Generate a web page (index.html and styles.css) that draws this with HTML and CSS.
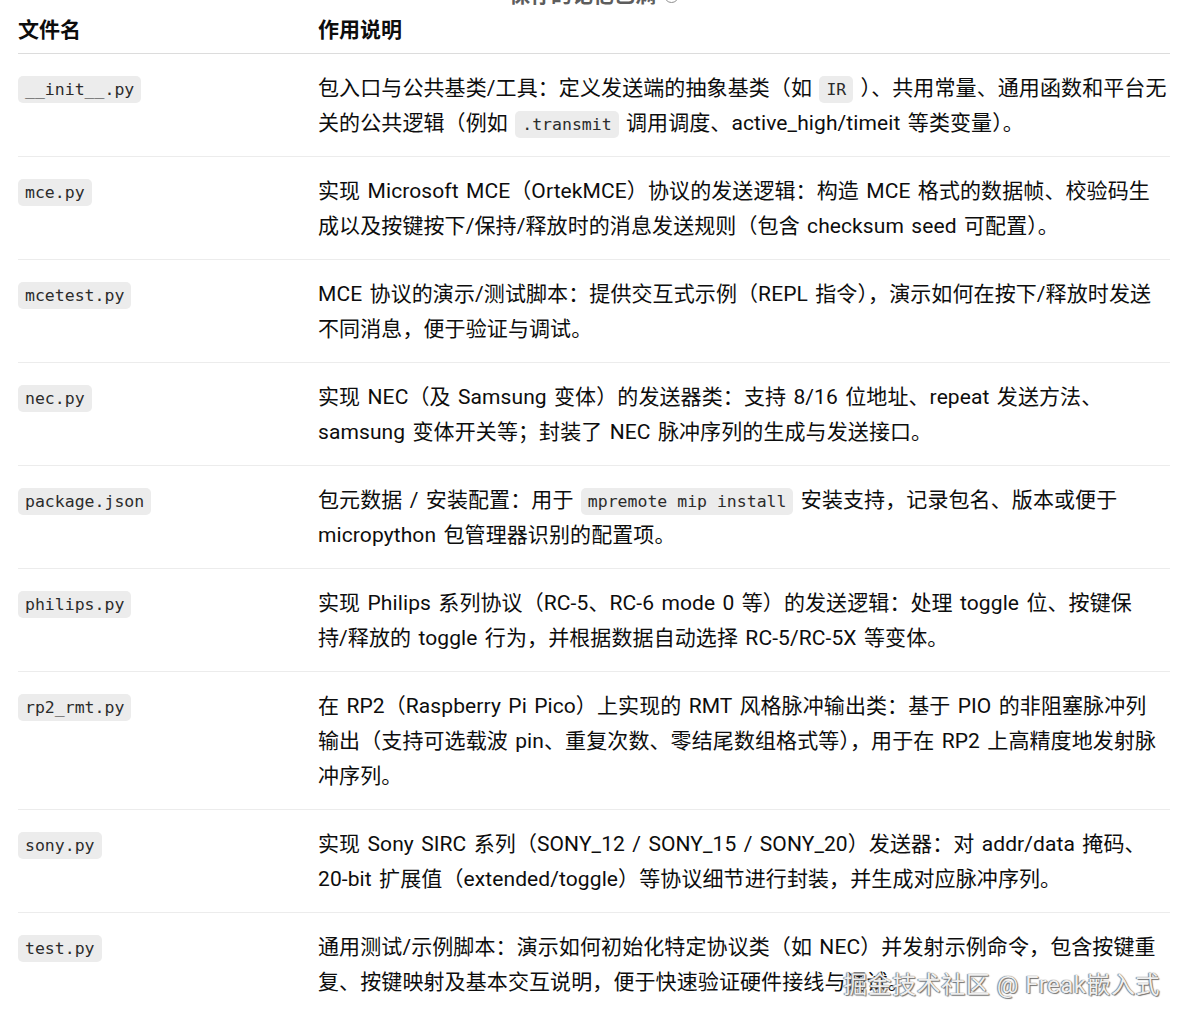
FILE: index.html
```html
<!DOCTYPE html>
<html lang="zh-CN">
<head>
<meta charset="utf-8">
<title>文件说明</title>
<link rel="stylesheet" href="styles.css">
</head>
<body>
<div class="page">
  <div class="notice"><span class="notice-text">保存的记忆已满 <span class="info">i</span></span></div>
  <table class="files">
    <thead>
      <tr><th class="c1">文件名</th><th class="c2">作用说明</th></tr>
    </thead>
    <tbody>
      <tr><td class="c1"><code>__init__.py</code></td><td class="c2">包入口与公共基类/工具：定义发送端的抽象基类（如 <code>IR</code> ）、共用常量、通用函数和平台无<br>关的公共逻辑（例如 <code>.transmit</code> 调用调度、active_high/timeit 等类变量）。</td></tr>
      <tr><td class="c1"><code>mce.py</code></td><td class="c2">实现 Microsoft MCE（OrtekMCE）协议的发送逻辑：构造 MCE 格式的数据帧、校验码生<br>成以及按键按下/保持/释放时的消息发送规则（包含 checksum seed 可配置）。</td></tr>
      <tr><td class="c1"><code>mcetest.py</code></td><td class="c2">MCE 协议的演示/测试脚本：提供交互式示例（REPL 指令），演示如何在按下/释放时发送<br>不同消息，便于验证与调试。</td></tr>
      <tr><td class="c1"><code>nec.py</code></td><td class="c2">实现 NEC（及 Samsung 变体）的发送器类：支持 8/16 位地址、repeat 发送方法、<br>samsung 变体开关等；封装了 NEC 脉冲序列的生成与发送接口。</td></tr>
      <tr><td class="c1"><code>package.json</code></td><td class="c2">包元数据 / 安装配置：用于 <code>mpremote mip install</code> 安装支持，记录包名、版本或便于<br>micropython 包管理器识别的配置项。</td></tr>
      <tr><td class="c1"><code>philips.py</code></td><td class="c2">实现 Philips 系列协议（RC-5、RC-6 mode 0 等）的发送逻辑：处理 toggle 位、按键保<br>持/释放的 toggle 行为，并根据数据自动选择 RC-5/RC-5X 等变体。</td></tr>
      <tr><td class="c1"><code>rp2_rmt.py</code></td><td class="c2">在 RP2（Raspberry Pi Pico）上实现的 RMT 风格脉冲输出类：基于 PIO 的非阻塞脉冲列<br>输出（支持可选载波 pin、重复次数、零结尾数组格式等），用于在 RP2 上高精度地发射脉<br>冲序列。</td></tr>
      <tr><td class="c1"><code>sony.py</code></td><td class="c2">实现 Sony SIRC 系列（SONY_12 / SONY_15 / SONY_20）发送器：对 addr/data 掩码、<br>20-bit 扩展值（extended/toggle）等协议细节进行封装，并生成对应脉冲序列。</td></tr>
      <tr class="last"><td class="c1"><code>test.py</code></td><td class="c2">通用测试/示例脚本：演示如何初始化特定协议类（如 NEC）并发射示例命令，包含按键重<br>复、按键映射及基本交互说明，便于快速验证硬件接线与调试。</td></tr>
    </tbody>
  </table>
  <div class="watermark">掘金技术社区 @ Freak嵌入式</div>
</div>
</body>
</html>
```
FILE: styles.css
```css
html, body {
  margin: 0;
  padding: 0;
  background: #ffffff;
}
body {
  font-family: Roboto, "Noto Sans CJK SC", sans-serif;
  color: #0d0d0d;
  overflow: hidden;
}
.page {
  position: relative;
  width: 1188px;
  height: 1024px;
  padding: 0 18px;
  box-sizing: border-box;
}
.notice {
  height: 6px;
  overflow: hidden;
  display: flex;
  align-items: flex-end;
  justify-content: center;
}
.notice-text {
  font-size: 21px;
  line-height: 22px;
  font-weight: 600;
  color: #5d5d5d;
  display: inline-flex;
  align-items: center;
  gap: 8px;
}
.info {
  display: inline-block;
  width: 13px;
  height: 13px;
  border: 1.5px solid #8f8f8f;
  border-radius: 50%;
  font-size: 10px;
  line-height: 13px;
  text-align: center;
  color: #8f8f8f;
}
.files {
  width: 1152px;
  border-collapse: collapse;
  table-layout: fixed;
  font-size: 21px;
  line-height: 35px;
}
.files th {
  text-align: left;
  font-weight: 700;
  padding: 7px 0 5px 0;
  border-bottom: 1px solid #dcdcdc;
}
.files td {
  vertical-align: top;
  padding: 17px 0 15px 0;
  border-bottom: 1px solid #ececec;
}
.files tr.last td {
  border-bottom: none;
}
.files .c1 {
  width: 300px;
}
.files td.c2 {
  padding-right: 0;
  white-space: nowrap;
  word-spacing: 2px;
  letter-spacing: 0.1px;
}
code {
  font-family: "DejaVu Sans Mono", "Liberation Mono", monospace;
  font-size: 16.5px;
  background: #ececec;
  color: #2b2b2b;
  border-radius: 5px;
  padding: 4px 7px;
  line-height: 20px;
  word-spacing: 0;
  letter-spacing: 0;
}
.watermark {
  position: absolute;
  right: 28px;
  bottom: 24px;
  font-size: 24px;
  line-height: 30px;
  color: rgba(255, 255, 255, 0.92);
  text-shadow: 0 0 1px #555, 1px 1px 1px #777, -1px 0 1px #999;
  letter-spacing: 0.5px;
}
```
